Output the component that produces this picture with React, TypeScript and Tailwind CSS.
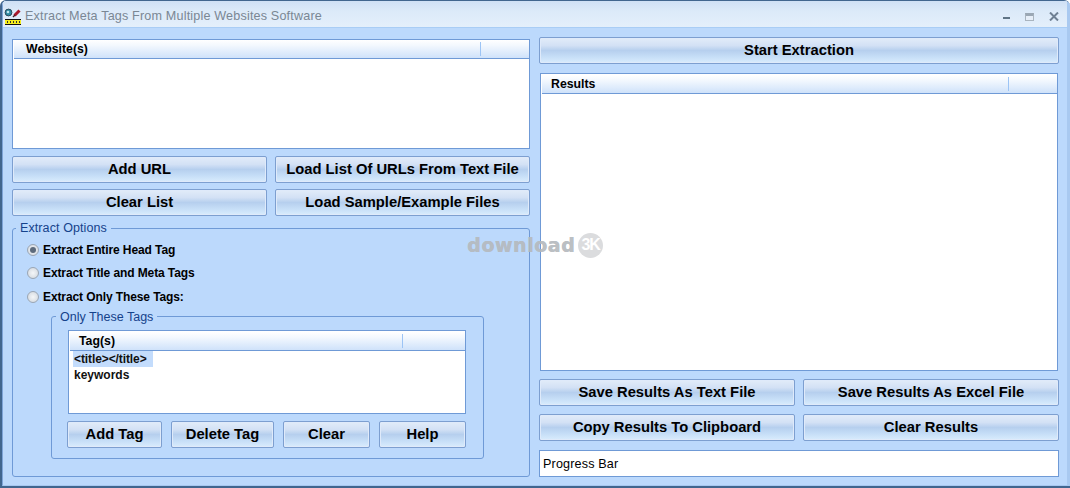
const btn =
  "flex items-center justify-center h-[27px] rounded-[2px] border border-[#7d9fd0] bg-[linear-gradient(#e2ecf9_0%,#d3e1f5_30%,#b6cfee_50%,#c6def7_75%,#d9ecfd_100%)] shadow-[inset_0_0_0_1px_#dfeafa] font-bold text-[14.75px] text-black";

function Btn({ label, className }: { label: string; className: string }) {
  return (
    <button type="button" className={btn + " " + className}>
      {label}
    </button>
  );
}

function ListHeader({ label, pad, className }: { label: string; pad: string; className?: string }) {
  return (
    <div className={"flex h-[19px] shrink-0 items-center border-b border-[#6f9ad6] bg-[linear-gradient(#ffffff_0%,#f3f8fe_30%,#cfe2fa_100%)] " + (className ?? "")}>
      <span className={"text-[12.3px] font-bold text-black " + pad}>{label}</span>
      <div className="h-[14px] w-px bg-[#9cc4f5]" />
    </div>
  );
}

function Radio({ label, checked }: { label: string; checked?: boolean }) {
  return (
    <label className="flex h-[23.5px] items-center gap-[4px] text-[12px] font-bold tracking-[-0.1px] text-black">
      <span className="flex h-[12px] w-[12px] items-center justify-center rounded-full border border-[#9aa6b4] bg-[radial-gradient(#f4f6f8,#cfd5dc)]">
        {checked && <span className="h-[6px] w-[6px] rounded-full bg-[#5d6b7c]" />}
      </span>
      {label}
    </label>
  );
}

function AppIcon() {
  return (
    <svg width="18" height="18" viewBox="0 0 18 18" className="shrink-0">
      <circle cx="4.5" cy="4.5" r="3.4" fill="#2f8ba3" stroke="#2c4a5c" strokeWidth="1" />
      <circle cx="4" cy="4" r="1.3" fill="#bfe6ef" />
      <path d="M10.5 7.5l5-5" stroke="#a8182b" strokeWidth="3" />
      <path d="M9 9l2-2" stroke="#4a1a20" strokeWidth="1.5" />
      <rect x="1" y="11" width="16" height="6" fill="#f6ee1e" />
      <path d="M1 11.5h16M1 16.5h16" stroke="#111" strokeWidth="1" />
      <path d="M3.5 13v2M6.5 13v2M9.5 13v2M12.5 13v2M15.5 13v2" stroke="#333" strokeWidth="1" />
    </svg>
  );
}

export default function App() {
  return (
    <div className="relative h-[488px] w-[1070px] overflow-hidden rounded-t-[6px] border-t border-l-[2px] border-b-[2px] border-[#41668f] font-['Liberation_Sans',sans-serif] text-[12px]">
      <div className="flex h-full flex-col border-l border-r-[3px] border-b border-l-[#7ea4d8] border-r-[#a9c9f0] border-b-[#a8c8f0] bg-[#bcd9fc]">
        {/* title bar */}
        <div className="flex h-[27px] shrink-0 items-center border-b border-[#a9cdf5] bg-[linear-gradient(#cfe0f5_0%,#dceaf9_40%,#e4effb_100%)] pl-[1px] pr-[9px] pt-[5px]">
          <AppIcon />
          <span className="ml-[3px] text-[12.6px] tracking-[0.17px] text-[#7a8794]">Extract Meta Tags From Multiple Websites Software</span>
          <div className="ml-auto flex items-center gap-[15px]">
            <div className="mt-[3px] h-[2px] w-[7px] bg-[#5f7486]" />
            <div className="h-[8px] w-[9px] border border-[#a9b4bf] border-t-[3px] border-t-[#9aa7b4] bg-[#e6eef8]" />
            <svg width="10" height="9" viewBox="0 0 10 9" className="mr-[-1px]">
              <path d="M1 0.5l8 8M9 0.5l-8 8" stroke="#6f8093" strokeWidth="2" />
            </svg>
          </div>
        </div>

        {/* body */}
        <div className="flex flex-1 gap-[9px] pl-[9px] pr-[8px] pt-[9px]">
          {/* left column */}
          <div className="flex w-[518px] flex-col pt-[2px]">
            <div className="flex h-[110px] flex-col border border-[#6f9ad6] bg-white pl-px">
              <ListHeader label="Website(s)" pad="w-[466px] pl-[12px]" />
            </div>
            <div className="mt-[7px] flex gap-[8px]">
              <Btn label="Add URL" className="w-[255px]" />
              <Btn label="Load List Of URLs From Text File" className="w-[255px]" />
            </div>
            <div className="mt-[6px] flex gap-[8px]">
              <Btn label="Clear List" className="w-[255px]" />
              <Btn label="Load Sample/Example Files" className="w-[255px]" />
            </div>

            <fieldset className="mt-[5px] h-[256px] rounded-[3px] border border-[#6f9ad6] pl-[14px]">
              <legend className="ml-[-11px] px-[4px] text-[12.5px] leading-[14px] tracking-[0.1px] text-[#15428b]">Extract Options</legend>
              <div className="flex flex-col pt-[3px]">
                <Radio label="Extract Entire Head Tag" checked />
                <Radio label="Extract Title and Meta Tags" />
                <Radio label="Extract Only These Tags:" />
              </div>
              <fieldset className="ml-[24px] mt-[1px] h-[149px] w-[433px] rounded-[3px] border border-[#6f9ad6] pl-[16px]">
                <legend className="ml-[-12px] px-[4px] text-[12.5px] leading-[14px] text-[#15428b]">Only These Tags</legend>
                <div className="mt-[6px] flex h-[84px] w-[398px] flex-col border border-[#6f9ad6] bg-white pl-px">
                  <ListHeader label="Tag(s)" pad="w-[332px] pl-[9px] pt-px" className="mt-px" />
                  <div className="ml-[3px] flex h-[16px] w-[80px] items-center bg-[#c3dcfc] pl-px font-bold tracking-[-0.1px] text-[#111]">&lt;title&gt;&lt;/title&gt;</div>
                  <div className="ml-[4px] flex h-[16px] items-center font-bold text-[#111]">keywords</div>
                </div>
                <div className="mt-[7px] flex gap-[9px]">
                  <Btn label="Add Tag" className="ml-[-1px] w-[95px]" />
                  <Btn label="Delete Tag" className="w-[103px]" />
                  <Btn label="Clear" className="w-[87px]" />
                  <Btn label="Help" className="w-[87px]" />
                </div>
              </fieldset>
            </fieldset>
          </div>

          {/* right column */}
          <div className="flex w-[520px] flex-col">
            <Btn label="Start Extraction" className="w-[520px]" />
            <div className="ml-px mt-[9px] flex h-[298px] w-[518px] flex-col border border-[#6f9ad6] bg-white pl-px">
              <ListHeader label="Results" pad="w-[466px] pl-[9px] pt-px" className="mt-px" />
            </div>
            <div className="mt-[8px] flex gap-[8px]">
              <Btn label="Save Results As Text File" className="w-[256px]" />
              <Btn label="Save Results As Excel File" className="w-[256px]" />
            </div>
            <div className="mt-[8px] flex gap-[8px]">
              <Btn label="Copy Results To Clipboard" className="w-[256px]" />
              <Btn label="Clear Results" className="w-[256px]" />
            </div>
            <div className="mt-[9px] flex h-[27px] items-center border border-[#6f9ad6] bg-white pl-[3px] pt-px text-[12.6px] tracking-[0.15px] text-black">Progress Bar</div>
          </div>
        </div>
      </div>

      {/* watermark over the window */}
      <div className="absolute left-[465px] top-[231px] flex items-center gap-[3px] opacity-90">
        <span className="font-['DejaVu_Sans',sans-serif] text-[19px] font-bold leading-[26px] tracking-[0.55px] text-[#b4b8bd] [text-shadow:0.5px_0_0_#b4b8bd]">download</span>
        <span className="flex h-[25px] w-[25px] items-center justify-center rounded-full bg-[#d8d9db] text-[16px] font-bold tracking-[-1px] text-white">3K</span>
      </div>
    </div>
  );
}
